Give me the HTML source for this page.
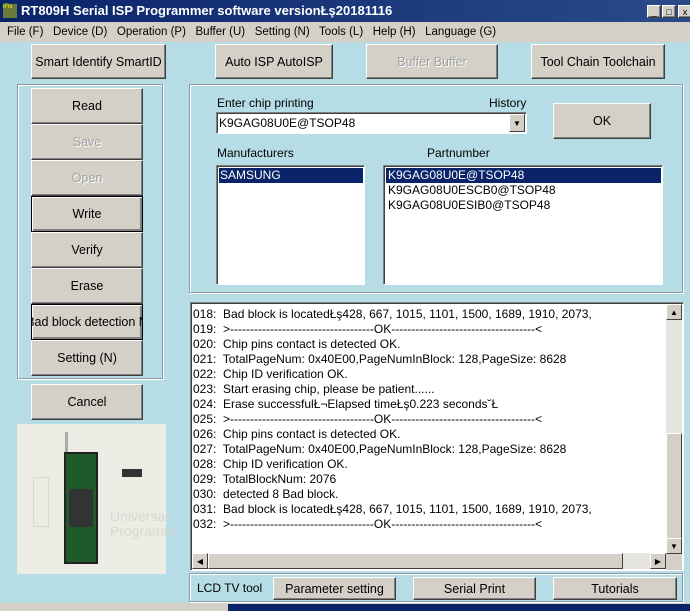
<!DOCTYPE html>
<html><head><style>
*{box-sizing:border-box;margin:0;padding:0}
body{width:690px;height:611px;overflow:hidden;background:#b6dde6;font-family:"Liberation Sans",sans-serif;font-size:12px;color:#000;position:relative}
.a{position:absolute}
.btn{position:absolute;background:#d4d0c8;border:1px solid;border-color:#fff #404040 #404040 #fff;box-shadow:inset -1px -1px 0 #808080;display:flex;align-items:center;justify-content:center;font-size:12.5px;white-space:nowrap;overflow:hidden}
.dis{color:#a0a0a0;text-shadow:1px 1px 0 #fff}
.grp{position:absolute;border:1px solid #8a9da2;box-shadow:1px 1px 0 #fff, inset 1px 1px 0 #fff}
.sunk{position:absolute;background:#fff;border:1px solid;border-color:#808080 #fff #fff #808080;box-shadow:inset 1px 1px 0 #404040}
.sel{background:#0a246a;color:#fff}
.log div{height:15px;line-height:15px;font-size:12px;white-space:nowrap}
.sb{position:absolute;background:#d4d0c8;border:1px solid;border-color:#fff #404040 #404040 #fff;font-size:8px;display:flex;align-items:center;justify-content:center}
</style></head><body>
<div class="a" style="left:0;top:0;width:690px;height:22px;background:linear-gradient(90deg,#0a246a,#2a4a8a);"></div>
<div class="a" style="left:3px;top:4px;width:14px;height:14px;background:#6a7a3a;font-size:6px;color:#ff0;line-height:7px">iFix</div>
<div class="a" style="left:21px;top:3px;color:#fff;font-weight:bold;font-size:13px">RT809H Serial ISP Programmer software versionŁş20181116</div>
<div class="btn" style="left:647px;top:5px;width:14px;height:13px;font-size:9px">_</div>
<div class="btn" style="left:662px;top:5px;width:14px;height:13px;font-size:9px">□</div>
<div class="btn" style="left:678px;top:5px;width:14px;height:13px;font-size:9px">x</div>
<div class="a" style="left:0;top:22px;width:690px;height:20px;background:#d4d0c8"></div>
<div class="a" style="left:7px;top:26px;font-size:11.5px">File (F)&nbsp;&nbsp; Device (D)&nbsp;&nbsp; Operation (P)&nbsp;&nbsp; Buffer (U)&nbsp;&nbsp; Setting (N)&nbsp;&nbsp; Tools (L)&nbsp;&nbsp; Help (H)&nbsp;&nbsp; Language (G)</div>

<div class="btn" style="left:31px;top:44px;width:135px;height:35px">Smart Identify SmartID</div>
<div class="btn" style="left:215px;top:44px;width:118px;height:35px">Auto ISP AutoISP</div>
<div class="btn dis" style="left:366px;top:44px;width:132px;height:35px">Buffer Buffer</div>
<div class="btn" style="left:531px;top:44px;width:134px;height:35px">Tool Chain Toolchain</div>

<div class="grp" style="left:17px;top:84px;width:146px;height:295px"></div>
<div class="btn" style="left:31px;top:88px;width:112px;height:36px">Read</div>
<div class="btn dis" style="left:31px;top:124px;width:112px;height:36px">Save</div>
<div class="btn dis" style="left:31px;top:160px;width:112px;height:36px">Open</div>
<div class="btn" style="left:31px;top:196px;width:112px;height:36px;border:1px solid #000;box-shadow:inset 1px 1px 0 #fff,inset -2px -2px 0 #808080">Write</div>
<div class="btn" style="left:31px;top:232px;width:112px;height:36px">Verify</div>
<div class="btn" style="left:31px;top:268px;width:112px;height:36px">Erase</div>
<div class="btn" style="left:31px;top:304px;width:112px;height:36px;border:1px solid #000;box-shadow:inset 1px 1px 0 #fff,inset -2px -2px 0 #808080">Bad block detection N</div>
<div class="btn" style="left:31px;top:340px;width:112px;height:36px">Setting (N)</div>
<div class="btn" style="left:31px;top:384px;width:112px;height:36px">Cancel</div>

<div class="a" style="left:17px;top:424px;width:149px;height:150px;background:#ecebe4">
 <div class="a" style="left:16px;top:53px;width:16px;height:50px;border:1px solid #d8d8d0"></div>
 <div class="a" style="left:48px;top:8px;width:3px;height:24px;background:#aaa"></div>
 <div class="a" style="left:47px;top:28px;width:34px;height:112px;background:#1f5a2a;border:2px solid #222"></div>
 <div class="a" style="left:52px;top:65px;width:24px;height:38px;background:#333"></div>
 <div class="a" style="left:105px;top:45px;width:20px;height:8px;background:#333"></div>
 <div class="a" style="left:93px;top:85px;color:#d8d8d0;font-size:14px;line-height:15px">Universal<br>Programm</div>
</div>

<div class="grp" style="left:189px;top:84px;width:494px;height:209px"></div>
<div class="a" style="left:217px;top:96px">Enter chip printing</div>
<div class="a" style="left:489px;top:96px">History</div>
<div class="sunk" style="left:216px;top:112px;width:311px;height:22px"><div class="a" style="left:2px;top:3px">K9GAG08U0E@TSOP48</div>
 <div class="sb" style="right:1px;top:1px;width:16px;height:18px">▼</div></div>
<div class="btn" style="left:553px;top:103px;width:98px;height:36px">OK</div>
<div class="a" style="left:217px;top:146px">Manufacturers</div>
<div class="a" style="left:427px;top:146px">Partnumber</div>
<div class="sunk" style="left:216px;top:165px;width:149px;height:120px"><div class="sel" style="margin:2px 1px 0 2px;height:15px;line-height:15px;padding-left:1px">SAMSUNG</div></div>
<div class="sunk" style="left:383px;top:165px;width:280px;height:120px;line-height:15px">
 <div class="sel" style="margin:2px 1px 0 2px;height:15px;padding-left:2px">K9GAG08U0E@TSOP48</div>
 <div style="padding-left:4px">K9GAG08U0ESCB0@TSOP48</div>
 <div style="padding-left:4px">K9GAG08U0ESIB0@TSOP48</div></div>

<div class="sunk log" style="left:190px;top:302px;width:494px;height:269px;padding:4px 0 0 2px">
<div>018:&nbsp; Bad block is locatedŁş428, 667, 1015, 1101, 1500, 1689, 1910, 2073,</div>
<div>019:&nbsp; &gt;------------------------------------OK------------------------------------&lt;</div>
<div>020:&nbsp; Chip pins contact is detected OK.</div>
<div>021:&nbsp; TotalPageNum: 0x40E00,PageNumInBlock: 128,PageSize: 8628</div>
<div>022:&nbsp; Chip ID verification OK.</div>
<div>023:&nbsp; Start erasing chip, please be patient......</div>
<div>024:&nbsp; Erase successfulŁ¬Elapsed timeŁş0.223 seconds˘Ł</div>
<div>025:&nbsp; &gt;------------------------------------OK------------------------------------&lt;</div>
<div>026:&nbsp; Chip pins contact is detected OK.</div>
<div>027:&nbsp; TotalPageNum: 0x40E00,PageNumInBlock: 128,PageSize: 8628</div>
<div>028:&nbsp; Chip ID verification OK.</div>
<div>029:&nbsp; TotalBlockNum: 2076</div>
<div>030:&nbsp; detected 8 Bad block.</div>
<div>031:&nbsp; Bad block is locatedŁş428, 667, 1015, 1101, 1500, 1689, 1910, 2073,</div>
<div>032:&nbsp; &gt;------------------------------------OK------------------------------------&lt;</div>
</div>
<div class="a" style="left:666px;top:304px;width:16px;height:250px;background:#e6e4de"></div>
<div class="sb" style="left:666px;top:304px;width:16px;height:16px">▲</div>
<div class="sb" style="left:666px;top:433px;width:16px;height:106px"></div>
<div class="sb" style="left:666px;top:538px;width:16px;height:16px">▼</div>
<div class="a" style="left:192px;top:553px;width:474px;height:16px;background:#e6e4de"></div>
<div class="sb" style="left:192px;top:553px;width:16px;height:16px">◀</div>
<div class="sb" style="left:208px;top:553px;width:415px;height:16px"></div>
<div class="sb" style="left:650px;top:553px;width:16px;height:16px">▶</div>
<div class="a" style="left:666px;top:554px;width:16px;height:16px;background:#d4d0c8"></div>

<div class="grp" style="left:189px;top:573px;width:494px;height:29px"></div>
<div class="a" style="left:197px;top:581px">LCD TV tool</div>
<div class="btn" style="left:273px;top:577px;width:123px;height:23px">Parameter setting</div>
<div class="btn" style="left:413px;top:577px;width:123px;height:23px">Serial Print</div>
<div class="btn" style="left:553px;top:577px;width:124px;height:23px">Tutorials</div>
<div class="a" style="left:0;top:603px;width:690px;height:8px;background:#d4d0c8"></div>
<div class="a" style="left:228px;top:604px;width:462px;height:7px;background:#0a246a"></div>
</body></html>
